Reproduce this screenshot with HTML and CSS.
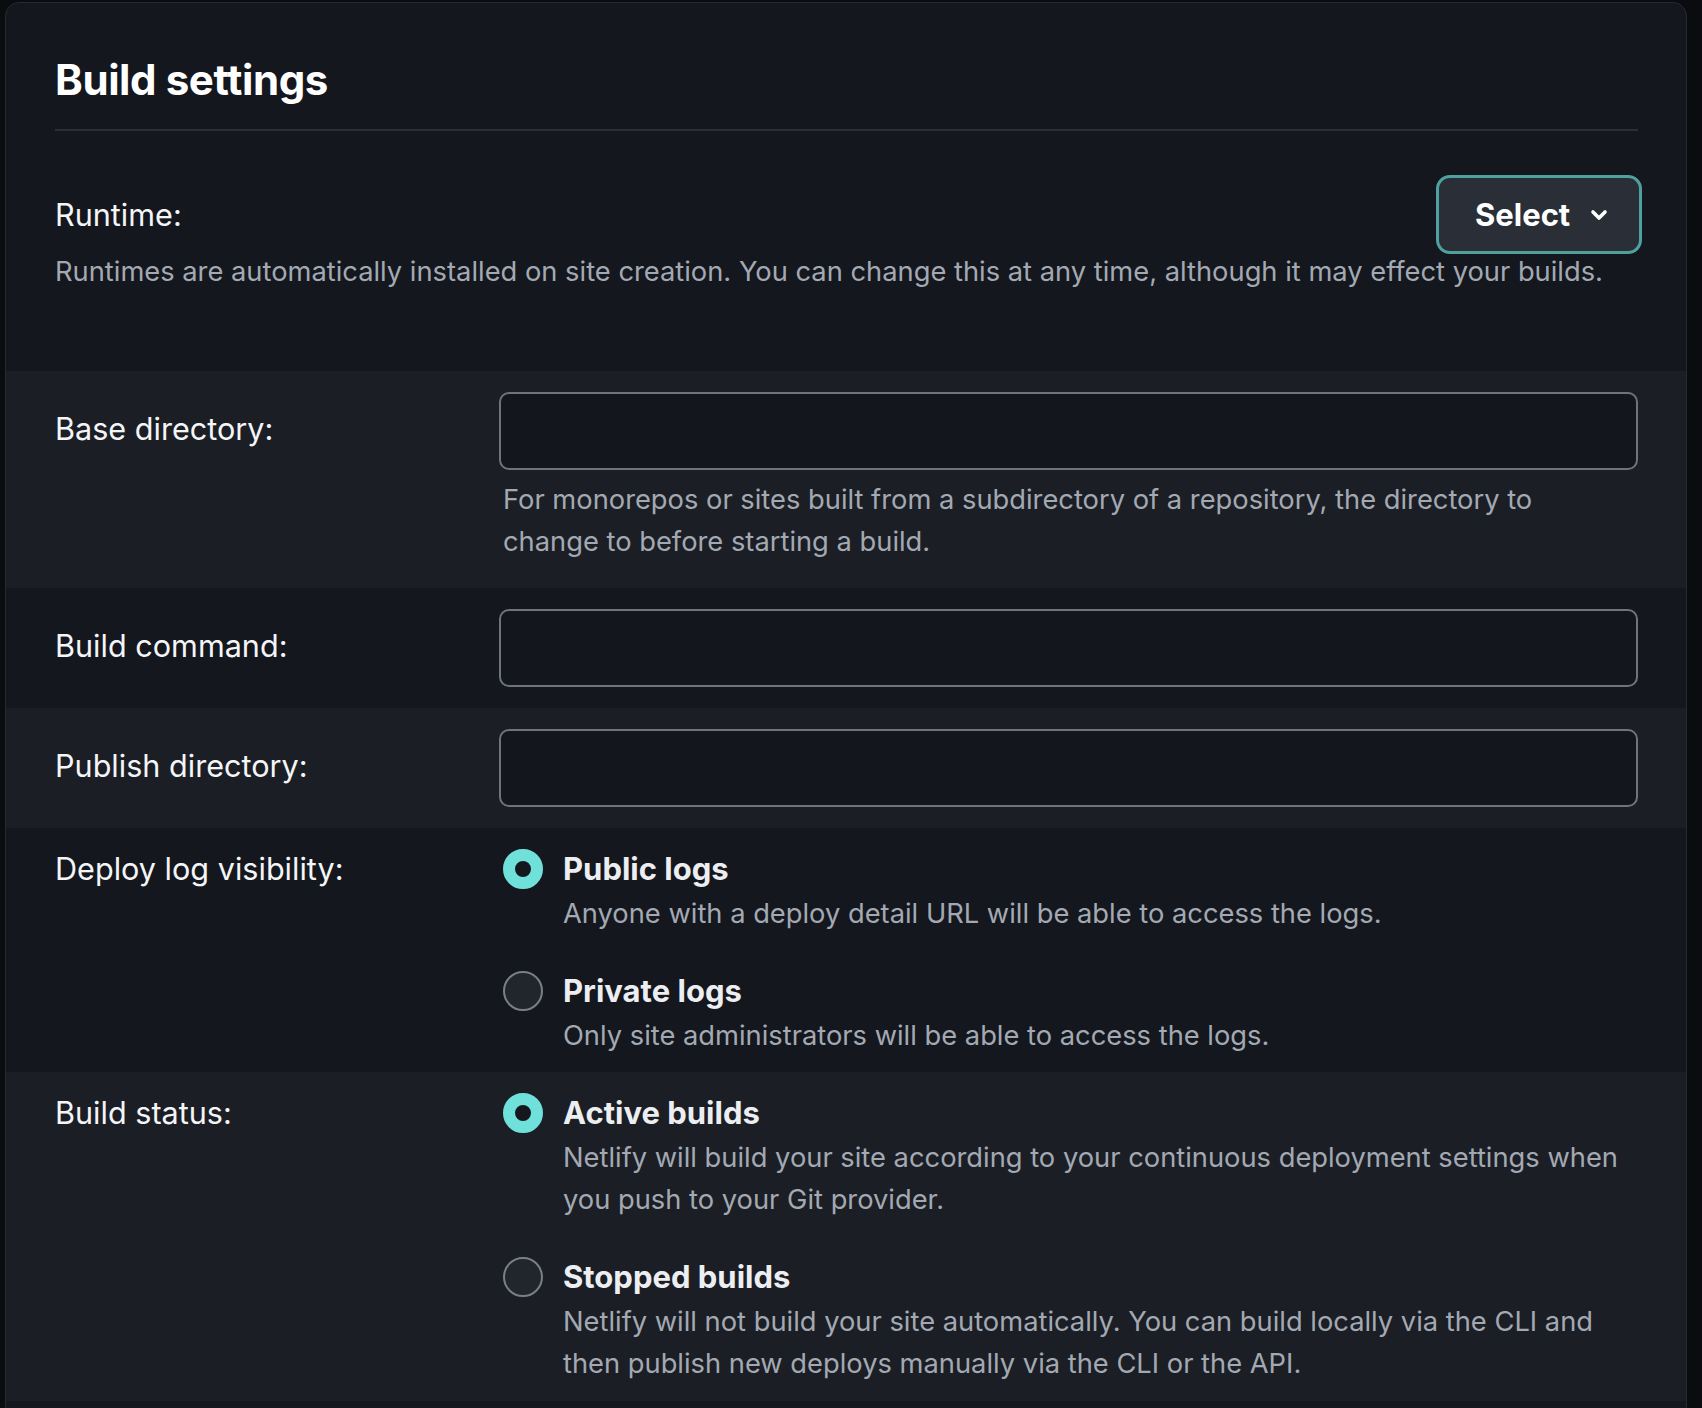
FILE: index.html
```html
<!DOCTYPE html>
<html lang="en">
<head>
<meta charset="utf-8">
<title>Build settings</title>
<link rel="stylesheet" href="styles.css">
</head>
<body>
<section class="card">
  <header class="card-header">
    <h1 class="card-title">Build settings</h1>
  </header>

  <div class="runtime">
    <div class="runtime-head">
      <span class="label">Runtime:</span>
      <button class="select-btn" type="button">
        <span>Select</span>
        <svg class="chevron" width="18" height="12" viewBox="0 0 18 12" aria-hidden="true">
          <path d="M3 3 L9 9 L15 3" fill="none" stroke="#fff" stroke-width="3.6" stroke-linecap="round" stroke-linejoin="round"/>
        </svg>
      </button>
    </div>
    <p class="desc runtime-desc">Runtimes are automatically installed on site creation. You can change this at any time, although it may effect your builds.</p>
  </div>

  <div class="row row-alt">
    <div class="label row-label">Base directory:</div>
    <div class="field">
      <input class="text-input" type="text">
      <p class="desc help">For monorepos or sites built from a subdirectory of a repository, the directory to change to before starting a build.</p>
    </div>
  </div>

  <div class="row row-tight">
    <div class="label row-label">Build command:</div>
    <div class="field">
      <input class="text-input" type="text">
    </div>
  </div>

  <div class="row row-alt row-tight">
    <div class="label row-label">Publish directory:</div>
    <div class="field">
      <input class="text-input" type="text">
    </div>
  </div>

  <div class="row row-radio">
    <div class="label radio-label">Deploy log visibility:</div>
    <div class="field options">
      <div class="option">
        <span class="radio radio-on"></span>
        <div class="option-title">Public logs</div>
        <div class="desc option-desc">Anyone with a deploy detail URL will be able to access the logs.</div>
      </div>
      <div class="option">
        <span class="radio"></span>
        <div class="option-title">Private logs</div>
        <div class="desc option-desc">Only site administrators will be able to access the logs.</div>
      </div>
    </div>
  </div>

  <div class="row row-alt row-radio row-last">
    <div class="label radio-label">Build status:</div>
    <div class="field options">
      <div class="option">
        <span class="radio radio-on"></span>
        <div class="option-title">Active builds</div>
        <div class="desc option-desc">Netlify will build your site according to your continuous deployment settings when you push to your Git provider.</div>
      </div>
      <div class="option">
        <span class="radio"></span>
        <div class="option-title">Stopped builds</div>
        <div class="desc option-desc">Netlify will not build your site automatically. You can build locally via the CLI and then publish new deploys manually via the CLI or the API.</div>
      </div>
    </div>
  </div>
  <div class="card-foot"></div>
</section>
</body>
</html>
```

FILE: styles.css
```css
* {
  box-sizing: border-box;
}

html,
body {
  margin: 0;
  padding: 0;
  background: #0a0c0f;
}

body {
  font-family: Inter, "Noto Sans", "Liberation Sans", sans-serif;
  color: #f4f5f7;
  overflow: hidden;
  height: 1408px;
}

.card {
  margin: 2px 0 0 5px;
  width: 1682px;
  background: #14171e;
  border: 1px solid #262a31;
  border-radius: 14px;
  overflow: hidden;
}

.card-header {
  padding: 50px 48px 0 49px;
}

.card-title {
  margin: 0;
  padding-bottom: 23px;
  border-bottom: 2px solid #2a2e35;
  font-size: 42px;
  line-height: 53px;
  font-weight: 700;
  color: #ffffff;
  letter-spacing: -0.4px;
}

.runtime {
  padding: 44px 48px 78px 49px;
}

.runtime-head {
  display: flex;
  align-items: center;
  justify-content: space-between;
}

.label {
  font-size: 30.6px;
  line-height: 42px;
  font-weight: 400;
  color: #f4f5f7;
}

.select-btn {
  display: flex;
  align-items: center;
  gap: 20px;
  height: 79px;
  width: 206px;
  padding: 0 36px 0 36px;
  background: #2a2f37;
  border: 3px solid #4ea19f;
  border-radius: 14px;
  color: #ffffff;
  font-family: inherit;
  font-size: 31px;
  font-weight: 700;
  margin-right: -4px;
}

.chevron {
  display: block;
  flex: none;
}

.desc {
  margin: 0;
  font-size: 27.3px;
  line-height: 42px;
  color: #a3a9b2;
}

.runtime-desc {
  margin-top: -3px;
}

.row {
  display: grid;
  grid-template-columns: 444px 1fr;
  padding: 21px 48px 25px 49px;
}

.row-alt {
  background: #1b1e25;
}

.row-tight {
  padding-bottom: 21px;
}

.row-label {
  margin-top: 16px;
}

.text-input {
  display: block;
  width: 100%;
  height: 78px;
  margin: 0;
  background: #13161c;
  border: 2px solid #6f747c;
  border-radius: 10px;
  color: #f4f5f7;
  font-family: inherit;
  font-size: 26px;
  padding: 0 16px;
  outline: none;
}

.help {
  margin-top: 9px;
  padding-left: 4px;
  padding-right: 60px;
}

.row-radio {
  padding-top: 17px;
  padding-bottom: 15px;
}

.row-last {
  padding-bottom: 16px;
}

.radio-label {
  line-height: 48px;
}

.options {
  display: flex;
  flex-direction: column;
  gap: 32px;
  padding-left: 4px;
}

.option {
  display: grid;
  grid-template-columns: 40px 1fr;
  column-gap: 20px;
}

.radio {
  grid-row: 1;
  grid-column: 1;
  width: 40px;
  height: 40px;
  margin-top: 4px;
  border-radius: 50%;
  border: 2px solid #7a7f87;
  background: #21252c;
}

.radio-on {
  border: 12px solid #70e0db;
  background: #14171e;
}

.option-title {
  grid-row: 1;
  grid-column: 2;
  font-size: 31px;
  line-height: 48px;
  font-weight: 700;
  color: #eceef1;
}

.option-desc {
  grid-row: 2;
  grid-column: 2;
}

.card-foot {
  height: 40px;
}
```
